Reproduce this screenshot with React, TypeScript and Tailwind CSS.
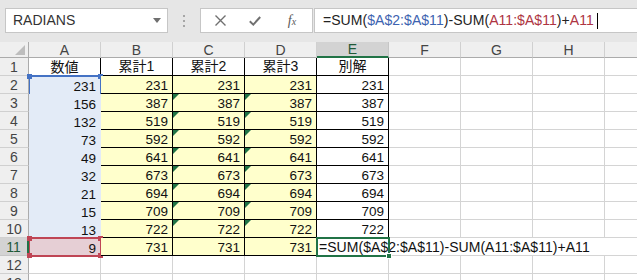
const values = [231, 156, 132, 73, 49, 32, 21, 15, 13, 9];
const cumulative = [231, 387, 519, 592, 641, 673, 694, 709, 722, 731];
const columns = ['A', 'B', 'C', 'D', 'E', 'F', 'G', 'H'];

const font = { fontFamily: '"Liberation Sans", "Noto Sans CJK JP", sans-serif' };

function Toolbar() {
  return (
    <div className="flex h-[42px] items-start bg-[#e6e6e6] pl-[5px] pt-[8px]">
      <div className="flex h-[25px] w-[163px] items-center justify-between border border-[#c6c6c6] bg-white pl-[7px] pr-[6px]">
        <span className="text-[14px] text-[#333]">RADIANS</span>
        <svg width="8" height="5" viewBox="0 0 8 5">
          <path d="M0 0h8L4 5z" fill="#6f6f6f" />
        </svg>
      </div>
      <div className="flex h-[25px] w-[32px] flex-col items-center justify-center gap-[3px]">
        <span className="h-[2px] w-[2px] bg-[#a6a6a6]" />
        <span className="h-[2px] w-[2px] bg-[#a6a6a6]" />
        <span className="h-[2px] w-[2px] bg-[#a6a6a6]" />
      </div>
      <div className="flex h-[25px] w-[113px] items-center border border-[#c6c6c6] bg-white">
        <div className="flex w-[37px] justify-center pl-[2px]">
          <svg width="11" height="11" viewBox="0 0 11 11">
            <path d="M0.5 0.5L10.5 10.5M10.5 0.5L0.5 10.5" stroke="#707070" strokeWidth="1.4" />
          </svg>
        </div>
        <div className="flex w-[34px] justify-center">
          <svg width="12" height="10" viewBox="0 0 12 10">
            <path d="M0.8 5.2L4.3 8.6L11.2 1" stroke="#707070" strokeWidth="2" fill="none" />
          </svg>
        </div>
        <div className="flex w-[40px] justify-center">
          <span className="text-[14px] italic text-[#5a5a5a]" style={{ fontFamily: '"Liberation Serif", serif' }}>
            f<span className="text-[10px]">x</span>
          </span>
        </div>
      </div>
      <div className="ml-px flex h-[25px] flex-1 items-center border border-r-0 border-[#c6c6c6] bg-white pl-[8px] text-[14px] tracking-[0.05px]">
        <span className="text-[#222]">=SUM(</span>
        <span className="text-[#3d63b0]">$A$2:$A$11</span>
        <span className="text-[#222]">)-SUM(</span>
        <span className="text-[#ae3442]">A11:$A$11</span>
        <span className="text-[#222]">)+</span>
        <span className="text-[#ae3442]">A11</span>
        <span className="ml-[3px] h-[16px] w-px bg-black" />
      </div>
    </div>
  );
}

function Triangle() {
  return (
    <svg className="absolute left-0 top-0" width="6" height="6" viewBox="0 0 6 6">
      <path d="M0 0h6L0 6z" fill="#1f7346" />
    </svg>
  );
}

function Handle({ className }: { className: string }) {
  return <span className={`absolute h-[5px] w-[5px] ${className}`} />;
}

function Gap({ last }: { last?: boolean }) {
  return <div className={last ? 'border-b border-[#d4d4d4]' : 'border-b border-r border-[#d4d4d4]'} />;
}

export default function App() {
  const header = ['数値', '累計1', '累計2', '累計3', '別解'];

  return (
    <div className="h-[280px] w-[637px] overflow-hidden bg-white text-[#111]" style={font}>
      <Toolbar />
      <div className="grid grid-cols-[29px_repeat(8,72px)_1fr] grid-rows-[16px_repeat(13,18px)] text-[13.5px]">
        {/* column header row */}
        <div className="relative border-b border-r border-[#ababab] bg-[#efefef]">
          <svg className="absolute bottom-[2px] right-[3px]" width="10" height="10" viewBox="0 0 10 10">
            <path d="M10 0V10H0z" fill="#bdbdbd" />
          </svg>
        </div>
        {columns.map((c) =>
          c === 'E' ? (
            <div key={c} className="flex items-center justify-center border-b-2 border-r border-b-[#217346] border-r-[#c6c6c6] bg-[#d3d3d3] text-[14px] leading-none text-[#1f5a38]">
              {c}
            </div>
          ) : (
            <div key={c} className="flex items-center justify-center border-b border-r border-b-[#ababab] border-r-[#d0d0d0] bg-[#efefef] text-[14px] leading-none text-[#444]">
              {c}
            </div>
          )
        )}
        <div className="border-b border-[#ababab] bg-[#efefef]" />

        {Array.from({ length: 13 }, (_, i) => {
          const row = i + 1;
          const isHead = row === 1;
          const isData = row >= 2 && row <= 11;
          const v = isData ? values[row - 2] : null;
          const cum = isData ? cumulative[row - 2] : null;
          const rowHeader =
            row === 11 ? (
              <div className="flex items-center justify-center border-b border-r-2 border-b-[#c6c6c6] border-r-[#217346] bg-[#d3d3d3] text-[14px] leading-none text-[#1f5a38]">
                {row}
              </div>
            ) : (
              <div className="flex items-center justify-center border-b border-r border-b-[#d0d0d0] border-r-[#ababab] bg-[#efefef] text-[14px] leading-none text-[#444]">
                {row}
              </div>
            );

          if (row > 11) {
            return (
              <div key={row} className="contents">
                {rowHeader}
                {columns.map((c) => (
                  <Gap key={c} />
                ))}
                <Gap last />
              </div>
            );
          }

          return (
            <div key={row} className="contents">
              {rowHeader}
              {/* A */}
              {isHead ? (
                <div className="flex items-end justify-center border-r border-black text-[14px] leading-[17px]">{header[0]}</div>
              ) : (
                <div className={`relative flex items-end justify-end pr-[5px] leading-none ${row === 11 ? 'bg-[#e6cfd5]' : 'bg-[#e3ebf7]'}`}>
                  <span className="mb-[1px]">{v}</span>
                  {row === 2 && (
                    <div className="pointer-events-none absolute left-0 top-[-1px] h-[162px] w-[73px] border-l border-r-2 border-t-2 border-[#4472c4]">
                      <Handle className="-left-[3px] -top-[3px] bg-[#4472c4]" />
                      <Handle className="-right-[3px] -top-[3px] bg-[#4472c4]" />
                    </div>
                  )}
                  {row === 11 && (
                    <div className="pointer-events-none absolute left-0 top-[-1px] h-[20px] w-[73px] border-2 border-l border-[#bf4555]">
                      <Handle className="-left-[3px] -top-[3px] bg-[#bf4555]" />
                      <Handle className="-right-[3px] -top-[3px] bg-[#bf4555]" />
                      <Handle className="-bottom-[3px] -left-[3px] bg-[#bf4555]" />
                      <Handle className="-bottom-[3px] -right-[3px] bg-[#bf4555]" />
                    </div>
                  )}
                </div>
              )}
              {/* B C D */}
              {[1, 2, 3].map((k) =>
                isHead ? (
                  <div key={k} className="flex items-end justify-center border-b border-r border-black text-[14px] leading-[17px]">
                    {header[k]}
                  </div>
                ) : (
                  <div key={k} className="relative flex items-end justify-end border-b border-r border-black bg-[#ffffcc] pr-[4px] leading-none">
                    {k > 1 && row >= 3 && row <= 10 && <Triangle />}
                    <span className="mb-[1px]">{cum}</span>
                  </div>
                )
              )}
              {/* E */}
              {isHead ? (
                <div className="flex items-end justify-center border-b border-r border-black text-[14px] leading-[17px]">{header[4]}</div>
              ) : row === 11 ? (
                <div className="relative col-span-4 flex items-end border-b border-[#d4d4d4] bg-white pl-[2px] text-[14px] leading-none tracking-[0.05px]">
                  <span className="mb-[1px] whitespace-nowrap">=SUM($A$2:$A$11)-SUM(A11:$A$11)+A11</span>
                  <div className="pointer-events-none absolute left-[-1px] top-[-1px] h-[20px] w-[74px] border-2 border-[#217346]">
                    <span className="absolute -bottom-[4px] -right-[4px] h-[6px] w-[6px] border border-white bg-[#217346]" />
                  </div>
                </div>
              ) : (
                <div className="flex items-end justify-end border-b border-r border-black pr-[4px] leading-none">
                  <span className="mb-[1px]">{cum}</span>
                </div>
              )}
              {row !== 11 && (
                <>
                  <Gap />
                  <Gap />
                  <Gap />
                </>
              )}
              <Gap last />
            </div>
          );
        })}
      </div>
    </div>
  );
}
